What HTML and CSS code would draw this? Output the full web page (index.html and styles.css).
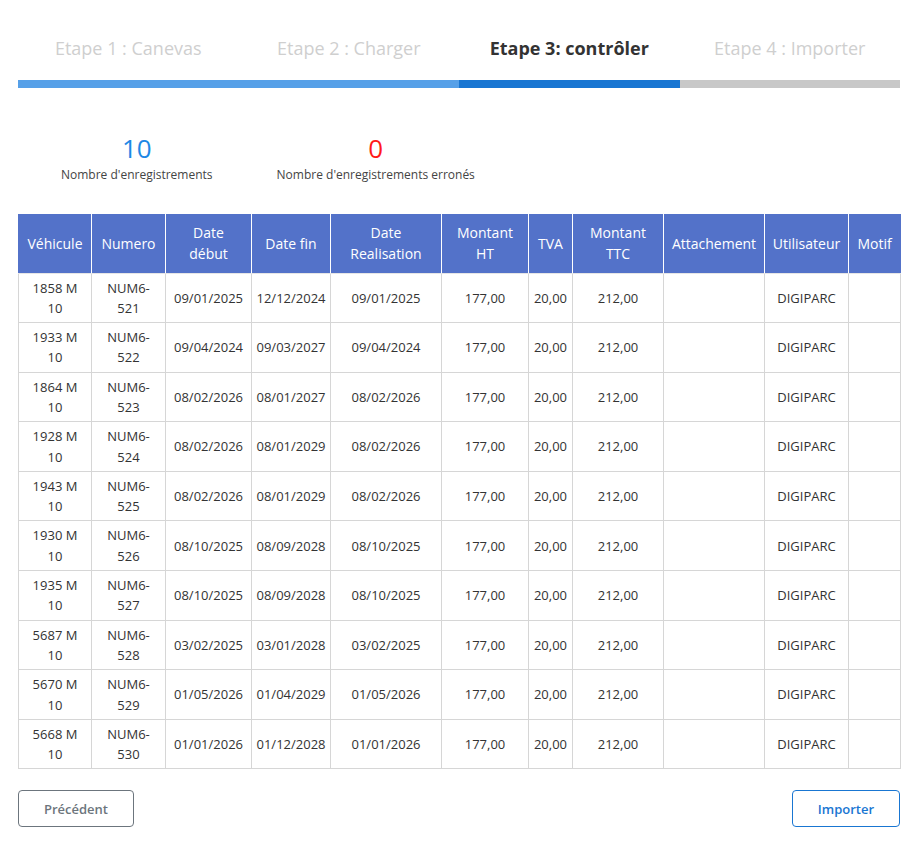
FILE: index.html
```html
<!DOCTYPE html>
<html lang="fr">
<head>
<meta charset="utf-8">
<title>Etape 3</title>
<link rel="stylesheet" href="styles.css">
</head>
<body>
<div class="page">
  <div class="stepper">
    <div class="step done"><div class="step-label">Etape 1 : Canevas</div><div class="step-bar"></div></div>
    <div class="step done"><div class="step-label">Etape 2 : Charger</div><div class="step-bar"></div></div>
    <div class="step current"><div class="step-label">Etape 3: contrôler</div><div class="step-bar"></div></div>
    <div class="step todo"><div class="step-label">Etape 4 : Importer</div><div class="step-bar"></div></div>
  </div>

  <div class="stats">
    <div class="stat">
      <div class="stat-num ok">10</div>
      <div class="stat-label">Nombre d'enregistrements</div>
    </div>
    <div class="stat">
      <div class="stat-num err">0</div>
      <div class="stat-label">Nombre d'enregistrements erronés</div>
    </div>
  </div>

  <table class="grid">
    <colgroup>
      <col class="w-veh"><col class="w-num"><col class="w-deb"><col class="w-fin"><col class="w-real"><col class="w-ht"><col class="w-tva"><col class="w-ttc"><col class="w-att"><col class="w-user"><col class="w-motif">
    </colgroup>
    <thead>
      <tr>
        <th>Véhicule</th><th>Numero</th><th>Date début</th><th>Date fin</th><th>Date Realisation</th><th>Montant HT</th><th>TVA</th><th>Montant TTC</th><th>Attachement</th><th>Utilisateur</th><th>Motif</th>
      </tr>
    </thead>
    <tbody>
      <tr><td class="wide">1858 M 10</td><td class="wide">NUM6-521</td><td>09/01/2025</td><td>12/12/2024</td><td>09/01/2025</td><td>177,00</td><td>20,00</td><td>212,00</td><td></td><td>DIGIPARC</td><td></td></tr>
      <tr><td class="wide">1933 M 10</td><td class="wide">NUM6-522</td><td>09/04/2024</td><td>09/03/2027</td><td>09/04/2024</td><td>177,00</td><td>20,00</td><td>212,00</td><td></td><td>DIGIPARC</td><td></td></tr>
      <tr><td class="wide">1864 M 10</td><td class="wide">NUM6-523</td><td>08/02/2026</td><td>08/01/2027</td><td>08/02/2026</td><td>177,00</td><td>20,00</td><td>212,00</td><td></td><td>DIGIPARC</td><td></td></tr>
      <tr><td class="wide">1928 M 10</td><td class="wide">NUM6-524</td><td>08/02/2026</td><td>08/01/2029</td><td>08/02/2026</td><td>177,00</td><td>20,00</td><td>212,00</td><td></td><td>DIGIPARC</td><td></td></tr>
      <tr><td class="wide">1943 M 10</td><td class="wide">NUM6-525</td><td>08/02/2026</td><td>08/01/2029</td><td>08/02/2026</td><td>177,00</td><td>20,00</td><td>212,00</td><td></td><td>DIGIPARC</td><td></td></tr>
      <tr><td class="wide">1930 M 10</td><td class="wide">NUM6-526</td><td>08/10/2025</td><td>08/09/2028</td><td>08/10/2025</td><td>177,00</td><td>20,00</td><td>212,00</td><td></td><td>DIGIPARC</td><td></td></tr>
      <tr><td class="wide">1935 M 10</td><td class="wide">NUM6-527</td><td>08/10/2025</td><td>08/09/2028</td><td>08/10/2025</td><td>177,00</td><td>20,00</td><td>212,00</td><td></td><td>DIGIPARC</td><td></td></tr>
      <tr><td class="wide">5687 M 10</td><td class="wide">NUM6-528</td><td>03/02/2025</td><td>03/01/2028</td><td>03/02/2025</td><td>177,00</td><td>20,00</td><td>212,00</td><td></td><td>DIGIPARC</td><td></td></tr>
      <tr><td class="wide">5670 M 10</td><td class="wide">NUM6-529</td><td>01/05/2026</td><td>01/04/2029</td><td>01/05/2026</td><td>177,00</td><td>20,00</td><td>212,00</td><td></td><td>DIGIPARC</td><td></td></tr>
      <tr><td class="wide">5668 M 10</td><td class="wide">NUM6-530</td><td>01/01/2026</td><td>01/12/2028</td><td>01/01/2026</td><td>177,00</td><td>20,00</td><td>212,00</td><td></td><td>DIGIPARC</td><td></td></tr>
    </tbody>
  </table>

  <div class="actions">
    <button class="btn btn-secondary">Précédent</button>
    <button class="btn btn-primary">Importer</button>
  </div>
</div>
</body>
</html>
```

FILE: styles.css
```css
* { box-sizing: border-box; }
html, body { margin: 0; padding: 0; background: #fff; }
body {
  font-family: "Open Sans", "Noto Sans", "DejaVu Sans", sans-serif;
  color: #333;
}
.page { padding: 0 19px 0 18px; }

.stepper { display: flex; padding-top: 36px; }
.step { flex: 1 1 0; display: flex; flex-direction: column; align-items: center; }
.step-label {
  font-size: 18px;
  line-height: 24px;
  color: #cfcfcf;
  white-space: nowrap;
}
.step.current .step-label { color: #333; font-weight: 700; }
.step-bar { align-self: stretch; height: 8px; margin-top: 20px; background: #c8c8c8; }
.step.done .step-bar { background: #56a0e8; }
.step.current .step-bar { background: #1976d2; }

.stats { display: flex; gap: 64px; margin-top: 44px; padding-left: 43px; }
.stat { display: flex; flex-direction: column; align-items: center; }
.stat-num { font-size: 26px; line-height: 32px; }
.stat-num.ok { color: #1e88e5; }
.stat-num.err { color: #ff1a1a; }
.stat-label { font-size: 12px; line-height: 16px; margin-top: 3px; color: #444; }

.grid {
  width: 882px;
  margin-top: 31px;
  table-layout: fixed;
  border-collapse: collapse;
  font-size: 13px;
}
.w-veh { width: 73px; }
.w-num { width: 74px; }
.w-deb { width: 86px; }
.w-fin { width: 79px; }
.w-real { width: 111px; }
.w-ht { width: 87px; }
.w-tva { width: 44px; }
.w-ttc { width: 91px; }
.w-att { width: 101px; }
.w-user { width: 84px; }
.w-motif { width: 52px; }

.grid th {
  background: #5372c9;
  color: #fff;
  font-weight: 400;
  font-size: 14px;
  line-height: 21px;
  padding: 8px 7px;
  height: 59px;
  text-align: center;
  vertical-align: middle;
  border-left: 1px solid #fff;
  border-right: 1px solid #fff;
  border-bottom: 1px solid #e6e6e6;
}
.grid th:first-child { border-left-color: #5372c9; }
.grid th:last-child { border-right-color: #5372c9; }

.grid td {
  border: 1px solid #d6d6d6;
  padding: 4px 3px;
  line-height: 20.3px;
  text-align: center;
  vertical-align: middle;
  white-space: normal;
}
.grid td.wide { padding: 4px 10px; }

.actions { display: flex; justify-content: space-between; margin-top: 21px; }
.btn {
  font-family: inherit;
  font-size: 13px;
  font-weight: 600;
  height: 37px;
  background: #fff;
  border-radius: 4px;
  cursor: pointer;
}
.btn-secondary { width: 116px; border: 1px solid #6c757d; color: #6c757d; }
.btn-primary { width: 108px; border: 1px solid #1976d2; color: #1976d2; }
```
